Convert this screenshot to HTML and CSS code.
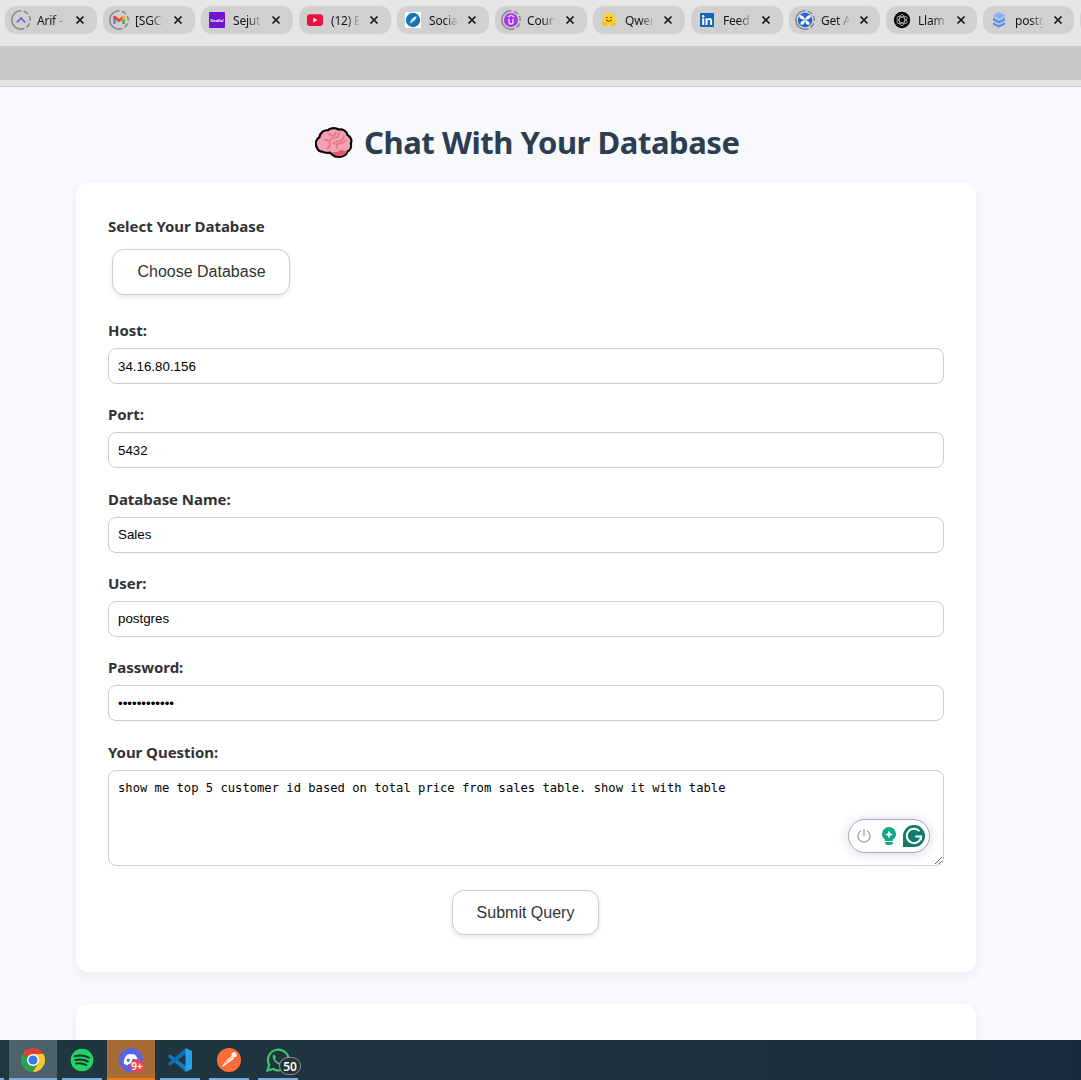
FILE: index.html
```html
<!DOCTYPE html>
<html lang="en">
<head>
<meta charset="utf-8">
<title>Chat With Your Database</title>
<link rel="stylesheet" href="styles.css">
</head>
<body>
<header class="browser">
  <div class="tabs">
    <div class="tab"><svg class="favicon" viewBox="0 0 20 20"><circle class="ring" cx="10" cy="10" r="9.2"/><path d="M6 12.3 10.2 8l3.9 4.3" fill="none" stroke="#7166d8" stroke-width="1.8"/></svg><span class="title">Arif -</span><svg class="close" viewBox="0 0 8 8"><path d="m.5.5 7 7m0-7-7 7"/></svg></div>
    <div class="tab"><svg class="favicon" viewBox="0 0 20 20"><circle class="ring" cx="10" cy="10" r="9.2"/><path d="M4.3 14V7h2.4v7z" fill="#4b83ec"/><path d="M13.3 14V7h2.4v7z" fill="#31a853"/><path d="M4.3 8V6.2q.8-1 2-.2L10 9l3.7-3q1.2-.8 2 .2V8L10 12.3z" fill="#e64335"/><path d="M13.3 6.3q2-1.6 2.4.4V9l-2.4 1.4z" fill="#fbbc04"/></svg><span class="title">[SGC</span><svg class="close" viewBox="0 0 8 8"><path d="m.5.5 7 7m0-7-7 7"/></svg></div>
    <div class="tab"><svg class="favicon" viewBox="0 0 20 20"><rect x="2" y="2" width="16" height="16" rx="1" fill="#7014d0"/><text x="10" y="11.6" class="logo-word" textLength="13.5">Dealls!</text></svg><span class="title">Sejut</span><svg class="close" viewBox="0 0 8 8"><path d="m.5.5 7 7m0-7-7 7"/></svg></div>
    <div class="tab"><svg class="favicon" viewBox="0 0 20 20"><rect x="2" y="4.3" width="16" height="11.6" rx="3" fill="#ee1040"/><path d="m8.3 7.8 4 2.3-4 2.3z" fill="#fff"/></svg><span class="title">(12) E</span><svg class="close" viewBox="0 0 8 8"><path d="m.5.5 7 7m0-7-7 7"/></svg></div>
    <div class="tab"><svg class="favicon" viewBox="0 0 20 20"><rect x="2" y="2" width="16" height="16" rx="1" fill="#fff"/><circle cx="10" cy="10" r="7.2" fill="#1674b5"/><path d="M13.8 5.8q-.2 5-7.2 8.4Q7.2 8 13.8 5.8M6 15l4.8-5.6" fill="#fff" stroke="#1674b5" stroke-width=".5"/></svg><span class="title">Socia</span><svg class="close" viewBox="0 0 8 8"><path d="m.5.5 7 7m0-7-7 7"/></svg></div>
    <div class="tab"><svg class="favicon" viewBox="0 0 20 20"><circle class="ring" cx="10" cy="10" r="9.2"/><circle cx="10" cy="10" r="7" fill="#a435f0"/><path d="M8 8.800v3.200a2 2 0 0 0 4 0V8.800M6.800 7 10 5.200 13.200 7" fill="none" stroke="#f0dcff" stroke-width="1.400"/></svg><span class="title">Cours</span><svg class="close" viewBox="0 0 8 8"><path d="m.5.5 7 7m0-7-7 7"/></svg></div>
    <div class="tab"><svg class="favicon" viewBox="0 0 20 20"><circle cx="10" cy="9.300" r="6.300" fill="#ffd21e"/><path d="M3.500 12q2-1 4 1.500l1 2.500H5q-2.500-.5-1.500-4m13 0q-2-1-4 1.500l-1 2.500H15q2.500-.5 1.500-4" fill="#f9bd20"/><path d="M7.500 7.500h.8m3.400 0h.8M7.500 9.800q2.500 2.800 5 0" fill="none" stroke="#59481b" stroke-width="1.100" stroke-linecap="round"/></svg><span class="title">Qwen</span><svg class="close" viewBox="0 0 8 8"><path d="m.5.5 7 7m0-7-7 7"/></svg></div>
    <div class="tab"><svg class="favicon" viewBox="0 0 20 20"><rect x="3" y="3" width="14" height="14" rx="1" fill="#1465bd"/><path d="M5.200 8.300h2V15h-2zM8.500 8.300h1.900v1q.8-1.200 2.200-1.200 2.500 0 2.500 3V15h-2v-3.500q0-1.700-1.200-1.700-1.400 0-1.400 1.800V15h-2z" fill="#fff"/><circle cx="6.200" cy="6.200" r="1.200" fill="#fff"/></svg><span class="title">Feed</span><svg class="close" viewBox="0 0 8 8"><path d="m.5.5 7 7m0-7-7 7"/></svg></div>
    <div class="tab narrow"><svg class="favicon" viewBox="0 0 20 20"><circle class="ring" cx="10" cy="10" r="9.2"/><circle cx="10" cy="10" r="7.200" fill="#1f62d1"/><path d="M9.600 9.600Q4 9 4.500 5.500 9 5.500 9.600 9.600m.8 0Q11 5.500 15.500 5.500 16 9 10.400 9.600M9.600 10.500q-.5 5-3.800 3.700-.4-3 3.800-3.700m.8 0q.5 5 3.800 3.700.4-3-3.800-3.700" fill="#fff" stroke="#fff" stroke-width=".6"/></svg><span class="title">Get A</span><svg class="close" viewBox="0 0 8 8"><path d="m.5.5 7 7m0-7-7 7"/></svg></div>
    <div class="tab narrow"><svg class="favicon" viewBox="0 0 20 20"><circle cx="10" cy="10" r="8.200" fill="#080808"/><g fill="none" stroke="#bbb" stroke-width=".8"><ellipse cx="10" cy="10" rx="2.700" ry="5.600"/><ellipse cx="10" cy="10" rx="2.700" ry="5.600" transform="rotate(60 10 10)"/><ellipse cx="10" cy="10" rx="2.700" ry="5.600" transform="rotate(120 10 10)"/></g></svg><span class="title">Llam</span><svg class="close" viewBox="0 0 8 8"><path d="m.5.5 7 7m0-7-7 7"/></svg></div>
    <div class="tab narrow"><svg class="favicon" viewBox="0 0 20 20"><path d="m4 5.200 6-3 6 3v9.200l-6 3.200-6-3.200z" fill="#abc4f5"/><path d="m4 5.200 6-3 6 3-6 3z" fill="#8badf2"/><path d="m4 8 6 3 6-3v2.200l-6 3-6-3zm0 4.600 6 3 6-3v1.900l-6 3.100-6-3.100z" fill="#5787df"/></svg><span class="title">postg</span><svg class="close" viewBox="0 0 8 8"><path d="m.5.5 7 7m0-7-7 7"/></svg></div>
    <div class="tab"></div>
  </div>
  <div class="toolbar"></div>
  <div class="edge"></div>
</header>

<main class="page">
  <h1 class="heading">
    <svg class="brain" viewBox="0 0 38 32"><path d="M2 21C-.5 16 1.500 12 4.500 10 5 5.500 9 3 12.500 3.300 16 .3 21 .7 23.500 2.500 28 1.500 32 4.500 32.500 8c4 2 4.500 6 3.300 8.500 1 4-1 7-3.300 8-1.500 4-5.500 6-9.500 5.200-4 .5-6.500-2.700-8-4-4.500.8-6-.7-8-1-2.500 0-4-1.700-5-3.700z" fill="#f5a0b3" stroke="#080506" stroke-width="2.200"/><path d="M17 25q7 .5 9-2.500 3 2.500 6.500 1.500-2 4.500-8 5Q20 29.500 17 25z" fill="#e75464"/><path d="M9 13q5-1 6 4 0 3-3 5m2.500-8q3-4 5.500-3.500m-6-4q2 3 5 2l2-3m3 0q0 4-3 5m8-2q0 5-5 6h-3m10-2q-2 4-6 4m-7-1q3 3 6 1m-2 1v4" fill="none" stroke="#df788e" stroke-width="1.600" stroke-linecap="round"/></svg>
    <span class="heading-text">Chat With Your Database</span>
  </h1>

  <form class="card">
    <div class="picker">
      <span class="label label-select">Select Your Database</span>
      <button class="button choose" type="button">Choose Database</button>
    </div>
    <div class="field"><label class="label" for="host">Host:</label><input class="input" id="host" value="34.16.80.156"></div>
    <div class="field"><label class="label" for="port">Port:</label><input class="input" id="port" value="5432"></div>
    <div class="field"><label class="label" for="name">Database Name:</label><input class="input" id="name" value="Sales"></div>
    <div class="field"><label class="label" for="user">User:</label><input class="input" id="user" value="postgres"></div>
    <div class="field"><label class="label" for="pass">Password:</label><input class="input" id="pass" type="password" value="abcdefghijkl"></div>
    <div class="question">
      <label class="label" for="question">Your Question:</label>
      <div class="textarea-wrap">
        <textarea class="textarea" id="question" spellcheck="false">show me top 5 customer id based on total price from sales table. show it with table</textarea>
        <div class="assistant">
          <svg class="power" viewBox="0 0 14 14"><path d="M4 1.700a6.100 6.100 0 1 0 6 0M7 0v7" fill="none" stroke="#999" stroke-width="1.200"/></svg>
          <svg class="bulb" viewBox="0 0 14 18"><path d="M7 0a7 7 0 0 1 7 7c0 3-1.600 4.300-3 5.500V14H3v-1.500C1.600 11.300 0 10 0 7a7 7 0 0 1 7-7zM3 15h8q0 3-2.500 3h-3Q3 18 3 15z" fill="#12a88a"/><path d="m7 3.500 1.100 2.800L11 7.500 8.100 8.700 7 11.500 5.900 8.700 3 7.500l2.900-1.200z" fill="#fff"/></svg>
          <svg class="grammarly" viewBox="0 0 22 22"><path d="M11 0a11 11 0 0 1 0 22H0V11A11 11 0 0 1 11 0z" fill="#117b69"/><path d="M16.500 6.200A7.200 7.200 0 1 0 18.200 11.500H12.300M18 11.500V15" fill="none" stroke="#fff" stroke-width="2"/></svg>
        </div>
      </div>
    </div>
    <button class="button submit" type="button">Submit Query</button>
  </form>
  <section class="card result"></section>
</main>

<footer class="taskbar">
  <div class="app sliver"></div>
  <div class="app active"><svg class="app-icon" viewBox="0 0 24 24"><path d="M12 12 1.600 6A12 12 0 0 1 22.400 6z" fill="#e24135"/><path d="M12 12 1.600 6A12 12 0 0 0 12 24l5.200-9z" fill="#2da34e"/><path d="M12 6h10.400A12 12 0 0 1 12 24l5.200-9z" fill="#fcc62e"/><circle cx="12" cy="12" r="6" fill="#fff"/><circle cx="12" cy="12" r="4.600" fill="#3c78e6"/></svg></div>
  <div class="app"><svg class="app-icon" viewBox="0 0 24 24"><circle cx="12" cy="12" r="11.300" fill="#20d565"/><path d="M4.800 8.200q7.500-2 14.400 1.600M5.500 12q6.500-1.700 12.300 1.500M6 15.600q5.500-1.200 10.300 1.500" fill="none" stroke="#18362b" stroke-width="2" stroke-linecap="round"/></svg></div>
  <div class="app alert"><svg class="app-icon" viewBox="0 0 24 24"><circle cx="12" cy="12" r="12" fill="#5764e8"/><path d="M8.500 6.500q3.500-.8 7 0 3.500 2.500 3.800 9-2 1.700-4 1.800l-1.100-1.500h-4.400l-1.100 1.500q-2-.1-4-1.800.3-6.500 3.800-9z" fill="#fff"/><ellipse cx="9.300" cy="12.200" rx="1.500" ry="1.700" fill="#5764e8"/><ellipse cx="14.700" cy="12.200" rx="1.500" ry="1.700" fill="#5764e8"/></svg><span class="badge badge-red">9+</span></div>
  <div class="app"><svg class="app-icon" viewBox="0 0 24 24"><path d="m0 8 2-1.800 15.800 11.900V24L1 9.500z" fill="#167bc1"/><path d="m0 16 2 1.900L17.800 5.900V0L1 14.500z" fill="#0870b7"/><path d="M17.500 0 24 3v18l-6.500 3z" fill="#27a0ee"/></svg></div>
  <div class="app"><svg class="app-icon" viewBox="0 0 24 24"><circle cx="12" cy="12" r="12" fill="#ff6c37"/><circle cx="17" cy="6.800" r="2.500" fill="#fff"/><path d="m14.500 8.500 2 2-7 5-4 3 3.500-5z" fill="#fff" stroke="#fff"/><path d="m7.500 15.800 8-6.500" stroke="#ff6c37" stroke-width=".8"/></svg></div>
  <div class="app"><svg class="app-icon" viewBox="0 0 24 24"><path d="m1.500 22.500 1.600-5.700A10.400 10.400 0 1 1 7.100 21z" fill="none" stroke="#3ec46d" stroke-width="2.200"/><path d="M8.300 6.300q-2.600 1.200-1.300 4.300 2 4.600 6.500 6.500 3.300 1 4.300-2.200l-3-1.500-1.500 1.500q-3-1.200-4.300-4l1-1.500z" fill="#3ec46d"/></svg><span class="badge badge-count">50</span></div>
</footer>
</body>
</html>
```
FILE: styles.css
```css
* { box-sizing: border-box; }

body {
  margin: 0;
  height: 1080px;
  display: flex;
  flex-direction: column;
  overflow: hidden;
  background: #f7f9fd;
  color: #303030;
  font-family: "Noto Sans", "Open Sans", sans-serif;
}

/* Browser chrome */
.browser { flex: none; background: #e6e6e6; overflow: hidden; }
.tabs { display: flex; gap: 6px; height: 46px; padding: 6px 0 0 5px; }
.tab {
  flex: none;
  display: flex;
  align-items: center;
  width: 92px;
  height: 28px;
  padding-left: 6px;
  border-radius: 11px;
  background: #d0d0d0;
}
.narrow { width: 91px; }
.favicon { flex: none; width: 20px; height: 20px; }
.ring { fill: none; stroke: #858589; stroke-width: 1.5; stroke-dasharray: 29 2.500 5 2.500 5 2.500 5 2.500; transform: rotate(90deg); transform-origin: 10px 10px; }
.logo-word { fill: #fff; font: bold 4px "Open Sans", sans-serif; text-anchor: middle; }
.title {
  flex: none;
  width: 28px;
  margin-left: 6px;
  overflow: hidden;
  white-space: nowrap;
  color: #151515;
  font: 12px/20px "Noto Sans", sans-serif;
  letter-spacing: -0.2px;
  position: relative;
  top: 1px;
  -webkit-mask-image: linear-gradient(90deg, #000 55%, transparent 105%);
  mask-image: linear-gradient(90deg, #000 55%, transparent 105%);
}
.close { flex: none; width: 8px; height: 8px; margin-left: 11px; stroke: #111; stroke-width: 1.600; overflow: visible; }
.toolbar { height: 34px; background: #c8c8ca; }
.edge { height: 7px; background: #e3e3e3; border-bottom: 1px solid #c8c8cb; }

/* Page */
.page { flex: 1; min-height: 0; overflow: hidden; padding: 31px 105px 0 76px; }
.heading {
  display: flex;
  align-items: center;
  height: 48px;
  margin: 0 0 17px;
  padding-left: 239px;
  gap: 11px;
  color: #2d3e50;
  font-size: 32px;
  line-height: 48px;
  white-space: nowrap;
}
.brain { flex: none; width: 38px; height: 32px; margin-top: 1px; }
.heading-text { font-size: 31px; letter-spacing: -0.45px; }
.card {
  display: flex;
  flex-direction: column;
  width: 900px;
  height: 788.500px;
  padding: 32px;
  border-radius: 12px;
  background: #fff;
  box-shadow: 0 4px 12px rgba(0, 0, 0, 0.05);
}
.picker { display: flex; flex-direction: column; align-items: flex-start; height: 104px; }
.label { height: 22px; color: #333; font-size: 15px; line-height: 22px; font-weight: 700; letter-spacing: -0.05px; white-space: nowrap; }
.button {
  border: 1px solid #ccc;
  border-radius: 12px;
  background: #fff;
  color: #333;
  font: 16px "Liberation Sans", Arial, sans-serif;
  box-shadow: 0 2px 5px rgba(0, 0, 0, 0.1);
}
.choose { width: 178px; height: 46px; margin: 12px 0 0 4px; padding: 0 0 0 1px; }
.submit { align-self: center; width: 147px; height: 45px; margin: 24.300px 1px 0 0; padding: 1px 0 0; }
.field { display: flex; flex-direction: column; gap: 7px; height: 65px; margin-bottom: 19.330px; }
.input {
  width: 836px;
  height: 36px;
  padding: 0 9px;
  border: 1px solid #ccc;
  border-radius: 8px;
  background: #fff;
  color: #000;
  font: 13.333px "Liberation Sans", Arial, sans-serif;
}
.question { display: flex; flex-direction: column; gap: 7px; }
.textarea-wrap { position: relative; height: 96px; }
.textarea {
  display: block;
  width: 836px;
  height: 96px;
  padding: 9px;
  border: 1px solid #ccc;
  border-radius: 8px;
  color: #000;
  font: 12.170px/16px "DejaVu Sans Mono", monospace;
}
.assistant {
  position: absolute;
  right: 14px;
  bottom: 13px;
  display: flex;
  align-items: center;
  width: 82px;
  height: 34px;
  padding-left: 8px;
  border: 1px solid #aaa8bd;
  border-radius: 17px;
  background: #fff;
  box-shadow: 0 1px 12px rgba(60, 60, 130, 0.2);
}
.power { width: 14px; height: 14px; }
.bulb { width: 14px; height: 18px; margin-left: 11px; }
.grammarly { width: 22px; height: 22px; margin-left: 7px; }
.result { margin-top: 32px; height: 80px; }

/* Taskbar */
.taskbar { flex: none; display: flex; height: 40px; gap: 5px; background: linear-gradient(90deg, #1f373f, #20343f 40%, #1e303d 70%, #1a293c); }
.app { position: relative; flex: none; display: flex; justify-content: center; align-items: center; width: 40px; margin-right: 4px; border-bottom: 2px solid #78aee0; }
.app-icon { width: 24px; height: 24px; margin-top: 2px; overflow: visible; }
.sliver { width: 4px; margin: 0; }
.active { width: 48px; margin: 0; background: #4c616a; }
.alert { width: 48px; margin: 0 0 0 -4px; background: #a76b36; border-color: #f27916; }
.badge { position: absolute; display: flex; align-items: center; justify-content: center; color: #fff; font-weight: 600; }
.badge-red { left: 23px; top: 19px; width: 14px; height: 14px; border-radius: 7px; background: #e34850; font-size: 10px; }
.badge-count { left: 21px; top: 17px; width: 22px; height: 18px; border: 1px solid #8a9295; border-radius: 9px; background: #283237; font-size: 12px; }
```
